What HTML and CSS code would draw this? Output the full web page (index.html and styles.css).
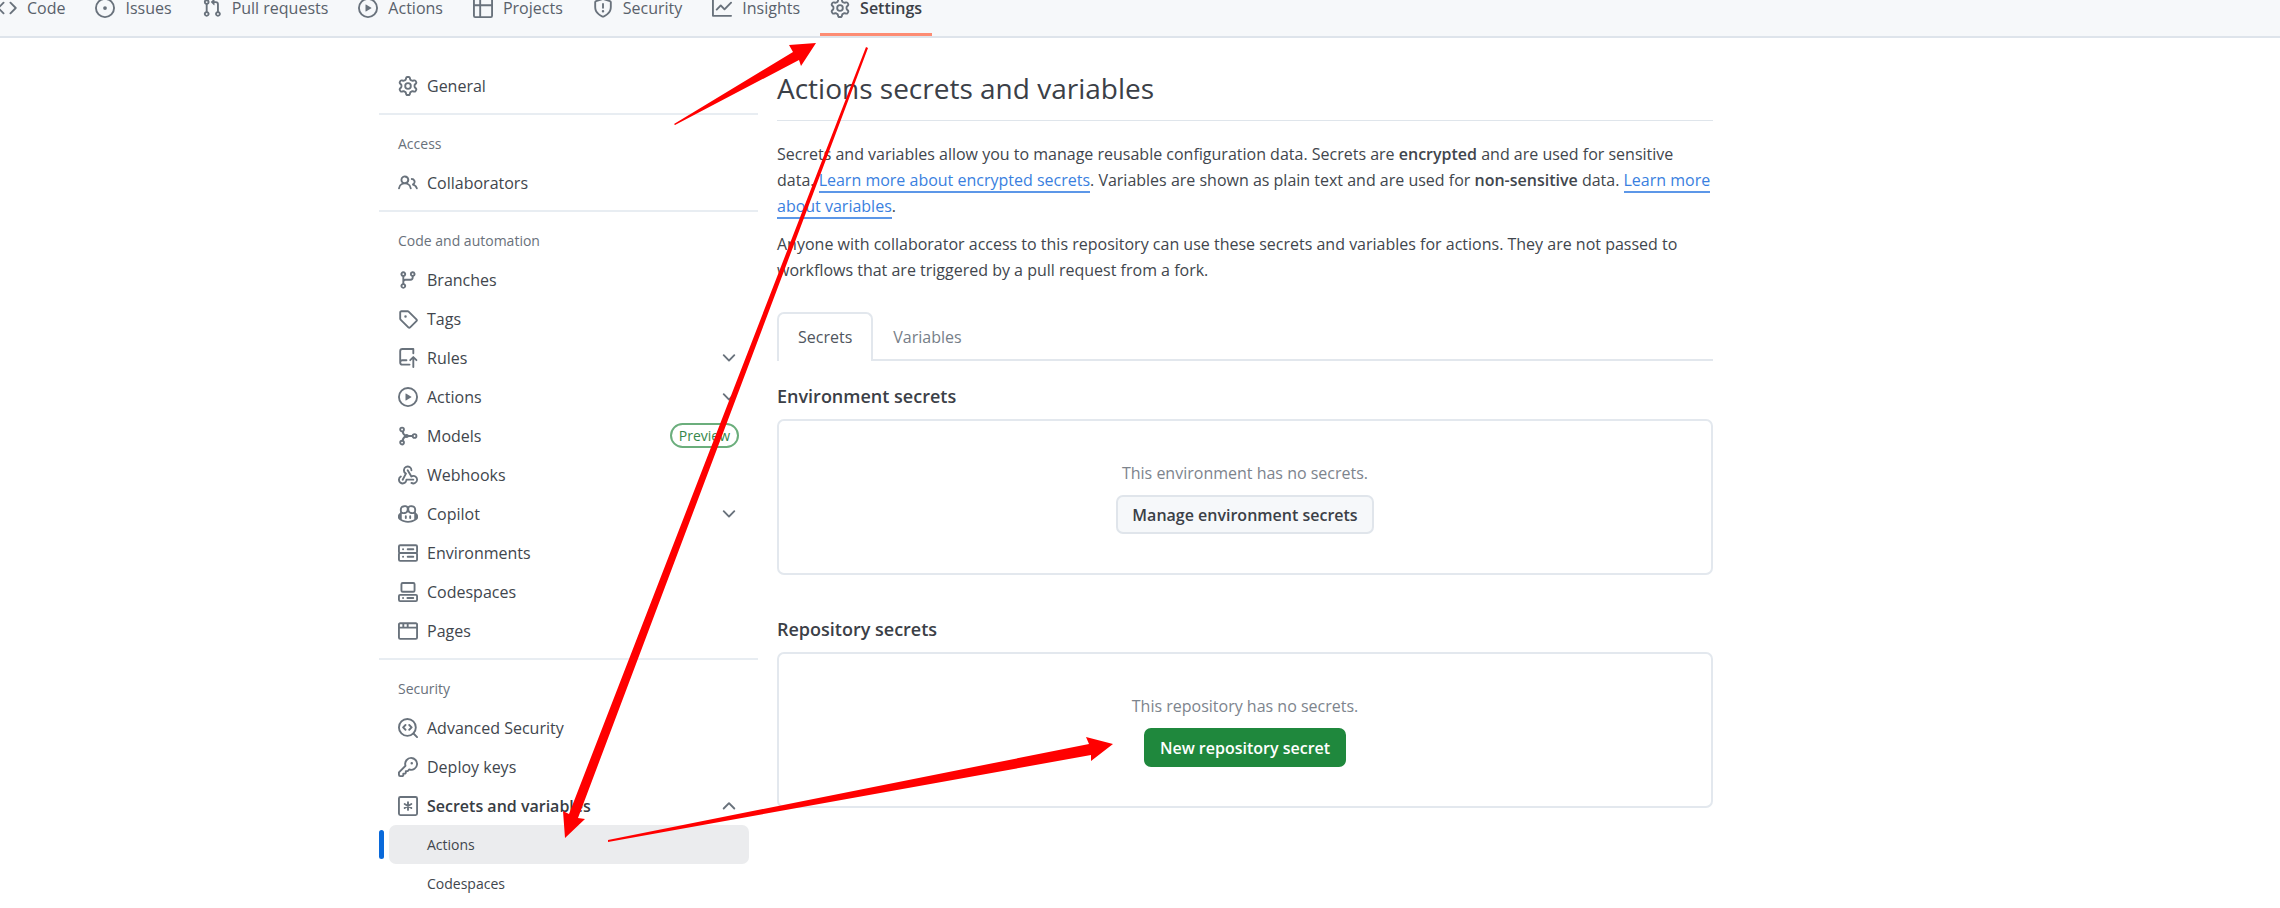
FILE: index.html
```html
<!DOCTYPE html>
<html lang="en">
<head>
    <meta charset="UTF-8">
    <title>Actions secrets and variables</title>
    <link rel="stylesheet" href="styles.css">
</head>
<body>
    <!-- icon set -->
    <svg class="sprite" aria-hidden="true">
        <symbol id="i-code" viewBox="0 0 16 16"><path d="m11.28 3.22 4.25 4.25a.75.75 0 0 1 0 1.06l-4.25 4.25a.749.749 0 0 1-1.275-.326.749.749 0 0 1 .215-.734L13.94 8l-3.72-3.72a.749.749 0 0 1 .326-1.275.749.749 0 0 1 .734.215Zm-6.56 0a.751.751 0 0 1 1.042.018.751.751 0 0 1 .018 1.042L2.06 8l3.72 3.72a.749.749 0 0 1-.326 1.275.749.749 0 0 1-.734-.215L.47 8.53a.75.75 0 0 1 0-1.06Z"/></symbol>
        <symbol id="i-issue" viewBox="0 0 16 16"><path d="M8 9.5a1.5 1.5 0 1 0 0-3 1.5 1.5 0 0 0 0 3Z"/><path d="M8 0a8 8 0 1 1 0 16A8 8 0 0 1 8 0ZM1.5 8a6.5 6.5 0 1 0 13 0 6.5 6.5 0 0 0-13 0Z"/></symbol>
        <symbol id="i-pull" viewBox="0 0 16 16"><path d="M1.5 3.25a2.25 2.25 0 1 1 3 2.122v5.256a2.251 2.251 0 1 1-1.5 0V5.372A2.25 2.25 0 0 1 1.5 3.25Zm5.677-.177L9.573.677A.25.25 0 0 1 10 .854V2.5h1A2.5 2.5 0 0 1 13.5 5v5.628a2.251 2.251 0 1 1-1.5 0V5a1 1 0 0 0-1-1h-1v1.646a.25.25 0 0 1-.427.177L7.177 3.427a.25.25 0 0 1 0-.354ZM3.75 2.5a.75.75 0 1 0 0 1.5.75.75 0 0 0 0-1.5Zm0 9.5a.75.75 0 1 0 0 1.5.75.75 0 0 0 0-1.5Zm8.25.75a.75.75 0 1 0 1.5 0 .75.75 0 0 0-1.5 0Z"/></symbol>
        <symbol id="i-play" viewBox="0 0 16 16"><path d="M8 0a8 8 0 1 1 0 16A8 8 0 0 1 8 0ZM1.5 8a6.5 6.5 0 1 0 13 0 6.5 6.5 0 0 0-13 0Zm4.879-2.773 4.264 2.559a.25.25 0 0 1 0 .428l-4.264 2.559A.25.25 0 0 1 6 10.559V5.442a.25.25 0 0 1 .379-.215Z"/></symbol>
        <symbol id="i-table" viewBox="0 0 16 16"><path d="M0 1.75C0 .784.784 0 1.75 0h12.5C15.216 0 16 .784 16 1.75v12.5A1.75 1.75 0 0 1 14.25 16H1.75A1.75 1.75 0 0 1 0 14.25ZM6.5 6.5v8h7.75a.25.25 0 0 0 .25-.25V6.5Zm8-1.5V1.75a.25.25 0 0 0-.25-.25H6.5V5Zm-13 1.5v7.75c0 .138.112.25.25.25H5v-8ZM5 5V1.5H1.75a.25.25 0 0 0-.25.25V5Z"/></symbol>
        <symbol id="i-shield" viewBox="0 0 16 16"><path d="M7.467.133a1.748 1.748 0 0 1 1.066 0l5.25 1.68A1.75 1.75 0 0 1 15 3.48V7c0 1.566-.32 3.182-1.303 4.682-.983 1.498-2.585 2.813-5.032 3.855a1.697 1.697 0 0 1-1.33 0c-2.447-1.042-4.049-2.357-5.032-3.855C1.32 10.182 1 8.566 1 7V3.48a1.75 1.75 0 0 1 1.217-1.667Zm.61 1.429a.25.25 0 0 0-.153 0l-5.25 1.68a.25.25 0 0 0-.174.238V7c0 1.358.275 2.666 1.057 3.86.784 1.194 2.121 2.34 4.366 3.297a.196.196 0 0 0 .154 0c2.245-.956 3.582-2.104 4.366-3.298C13.225 9.666 13.5 8.36 13.5 7V3.48a.251.251 0 0 0-.174-.237l-5.25-1.68ZM8.75 4.75v3a.75.75 0 0 1-1.5 0v-3a.75.75 0 0 1 1.5 0ZM9 10.5a1 1 0 1 1-2 0 1 1 0 0 1 2 0Z"/></symbol>
        <symbol id="i-graph" viewBox="0 0 16 16"><path d="M1.5 1.75V13.5h13.75a.75.75 0 0 1 0 1.5H.75a.75.75 0 0 1-.75-.75V1.75a.75.75 0 0 1 1.5 0Zm14.28 2.53-5.25 5.25a.75.75 0 0 1-1.06 0L7 7.06 4.28 9.78a.751.751 0 0 1-1.042-.018.751.751 0 0 1-.018-1.042l3.25-3.25a.75.75 0 0 1 1.06 0L10 7.94l4.72-4.72a.751.751 0 0 1 1.042.018.751.751 0 0 1 .018 1.042Z"/></symbol>
        <symbol id="i-gear" viewBox="0 0 16 16"><path d="M8 0a8.2 8.2 0 0 1 .701.031C9.444.095 9.99.645 10.16 1.29l.288 1.107c.018.066.079.158.212.224.231.114.454.243.668.386.123.082.233.09.299.071l1.103-.303c.644-.176 1.392.021 1.82.63.27.385.506.792.704 1.218.315.675.111 1.422-.364 1.891l-.814.806c-.049.048-.098.147-.088.294.016.257.016.515 0 .772-.01.147.038.246.088.294l.814.806c.475.469.679 1.216.364 1.891a7.977 7.977 0 0 1-.704 1.217c-.428.61-1.176.807-1.82.63l-1.102-.302c-.067-.019-.177-.011-.3.071a5.909 5.909 0 0 1-.668.386c-.133.066-.194.158-.211.224l-.29 1.106c-.168.646-.715 1.196-1.458 1.26a8.006 8.006 0 0 1-1.402 0c-.743-.064-1.289-.614-1.458-1.26l-.289-1.106c-.018-.066-.079-.158-.212-.224a5.738 5.738 0 0 1-.668-.386c-.123-.082-.233-.09-.299-.071l-1.103.303c-.644.176-1.392-.021-1.82-.63a8.12 8.12 0 0 1-.704-1.218c-.315-.675-.111-1.422.363-1.891l.815-.806c.05-.048.098-.147.088-.294a6.214 6.214 0 0 1 0-.772c.01-.147-.038-.246-.088-.294l-.815-.806C.635 6.045.431 5.298.746 4.623a7.92 7.92 0 0 1 .704-1.217c.428-.61 1.176-.807 1.82-.63l1.102.302c.067.019.177.011.3-.071.214-.143.437-.272.668-.386.133-.066.194-.158.211-.224l.29-1.106C6.009.645 6.556.095 7.299.03 7.53.01 7.764 0 8 0Zm-.571 1.525c-.036.003-.108.036-.137.146l-.289 1.105c-.147.561-.549.967-.998 1.189-.173.086-.34.183-.5.29-.417.278-.97.423-1.529.27l-1.103-.303c-.109-.03-.175.016-.195.045-.22.312-.412.644-.573.99-.014.031-.021.11.059.19l.815.806c.411.406.562.957.53 1.456a4.709 4.709 0 0 0 0 .582c.032.499-.119 1.05-.53 1.456l-.815.806c-.081.08-.073.159-.059.19.162.346.353.677.573.989.02.03.085.076.195.046l1.102-.303c.56-.153 1.113-.008 1.53.27.161.107.328.204.501.29.447.222.85.629.997 1.189l.289 1.105c.029.109.101.143.137.146a6.6 6.6 0 0 0 1.142 0c.036-.003.108-.036.137-.146l.289-1.105c.147-.561.549-.967.998-1.189.173-.086.34-.183.5-.29.417-.278.97-.423 1.529-.27l1.103.303c.109.029.175-.016.195-.045.22-.313.411-.644.573-.99.014-.031.021-.11-.059-.19l-.815-.806c-.411-.406-.562-.957-.53-1.456a4.709 4.709 0 0 0 0-.582c-.032-.499.119-1.05.53-1.456l.815-.806c.081-.08.073-.159.059-.19a6.464 6.464 0 0 0-.573-.989c-.02-.03-.085-.076-.195-.046l-1.102.303c-.56.153-1.113.008-1.53-.27a4.44 4.44 0 0 0-.501-.29c-.447-.222-.85-.629-.997-1.189l-.289-1.105c-.029-.11-.101-.143-.137-.146a6.6 6.6 0 0 0-1.142 0ZM11 8a3 3 0 1 1-6 0 3 3 0 0 1 6 0ZM9.5 8a1.5 1.5 0 1 0-3.001.001A1.5 1.5 0 0 0 9.5 8Z"/></symbol>
        <symbol id="i-people" viewBox="0 0 16 16"><path d="M2 5.5a3.5 3.5 0 1 1 5.898 2.549 5.508 5.508 0 0 1 3.034 4.084.75.75 0 1 1-1.482.235 4 4 0 0 0-7.9 0 .75.75 0 0 1-1.482-.236A5.507 5.507 0 0 1 3.102 8.05 3.493 3.493 0 0 1 2 5.5ZM11 4a3.001 3.001 0 0 1 2.22 5.018 5.01 5.01 0 0 1 2.56 3.012.749.749 0 0 1-.885.954.752.752 0 0 1-.549-.514 3.507 3.507 0 0 0-2.522-2.372.75.75 0 0 1-.574-.73v-.352a.75.75 0 0 1 .416-.672A1.5 1.5 0 0 0 11 5.5.75.75 0 0 1 11 4Zm-5.5-.5a2 2 0 1 0-.001 3.999A2 2 0 0 0 5.5 3.5Z"/></symbol>
        <symbol id="i-branch" viewBox="0 0 16 16"><path d="M9.5 3.25a2.25 2.25 0 1 1 3 2.122V6A2.5 2.5 0 0 1 10 8.5H6a1 1 0 0 0-1 1v1.128a2.251 2.251 0 1 1-1.5 0V5.372a2.25 2.25 0 1 1 1.5 0v1.836A2.493 2.493 0 0 1 6 7h4a1 1 0 0 0 1-1v-.628A2.25 2.25 0 0 1 9.5 3.25Zm-6 0a.75.75 0 1 0 1.5 0 .75.75 0 0 0-1.5 0Zm8.25-.75a.75.75 0 1 0 0 1.5.75.75 0 0 0 0-1.5ZM4.25 12a.75.75 0 1 0 0 1.5.75.75 0 0 0 0-1.5Z"/></symbol>
        <symbol id="i-tag" viewBox="0 0 16 16"><path d="M1 7.775V2.75C1 1.784 1.784 1 2.75 1h5.025c.464 0 .91.184 1.238.513l6.25 6.25a1.75 1.75 0 0 1 0 2.474l-5.026 5.026a1.75 1.75 0 0 1-2.474 0l-6.25-6.25A1.752 1.752 0 0 1 1 7.775Zm1.5 0c0 .066.026.13.073.177l6.25 6.25a.25.25 0 0 0 .354 0l5.025-5.025a.25.25 0 0 0 0-.354l-6.25-6.25a.25.25 0 0 0-.177-.073H2.75a.25.25 0 0 0-.25.25ZM6 5a1 1 0 1 1 0 2 1 1 0 0 1 0-2Z"/></symbol>
        <symbol id="i-push" viewBox="0 0 16 16"><path d="M1 2.5A2.5 2.5 0 0 1 3.5 0h8.75a.75.75 0 0 1 .75.75v3.5a.75.75 0 0 1-1.5 0V1.5h-8a1 1 0 0 0-1 1v6.708A2.493 2.493 0 0 1 3.5 9h3.25a.75.75 0 0 1 0 1.5H3.5a1 1 0 0 0 0 2h5.75a.75.75 0 0 1 0 1.5H3.5A2.5 2.5 0 0 1 1 11.5Zm13.23 7.79-1.23-1.224v6.184a.75.75 0 0 1-1.5 0V9.066l-1.224 1.224a.75.75 0 0 1-1.06-1.06l2.505-2.504a.75.75 0 0 1 1.06 0L15.28 9.23a.751.751 0 0 1-.018 1.042.751.751 0 0 1-1.032.018Z"/></symbol>
        <symbol id="i-models" viewBox="0 0 16 16"><g fill="none" stroke="currentColor" stroke-width="1.5"><circle cx="3.25" cy="2.75" r="1.5"/><circle cx="3.25" cy="13.25" r="1.5"/><circle cx="13.25" cy="8" r="1.5"/><path d="M3.6 4.2C4 6 5 7.4 6.6 8 5 8.6 4 10 3.6 11.8M6.4 8h5.3"/></g><circle cx="7" cy="8" r="1.6"/></symbol>
        <symbol id="i-webhook" viewBox="0 0 16 16"><path d="M5.5 4.25a2.25 2.25 0 0 1 4.5 0 .75.75 0 0 0 1.5 0 3.75 3.75 0 1 0-6.14 2.889l-2.272 4.258a.75.75 0 0 0 1.324.706L7 7.25a.75.75 0 0 0-.309-1.015A2.25 2.25 0 0 1 5.5 4.25Z"/><path d="M7.364 3.607a.75.75 0 0 1 1.03.257l2.608 4.349a3.75 3.75 0 1 1-.628 6.785.75.75 0 0 1 .752-1.299 2.25 2.25 0 1 0-.033-3.88.75.75 0 0 1-1.03-.256L7.107 4.636a.75.75 0 0 1 .257-1.03Z"/><path d="M2.9 8.776A.75.75 0 0 1 2.625 9.8 2.25 2.25 0 1 0 6 11.75a.75.75 0 0 1 .75-.751h5.5a.75.75 0 0 1 0 1.5H7.425a3.751 3.751 0 1 1-5.55-3.998.75.75 0 0 1 1.024.274Z"/></symbol>
        <symbol id="i-copilot" viewBox="0 0 16 16"><path d="M7.998 15.035c-4.562 0-7.873-2.914-7.998-3.749V9.338c.085-.628.677-1.686 1.588-2.065.013-.07.024-.143.036-.218.029-.183.06-.384.126-.612-.201-.508-.254-1.084-.254-1.656 0-.87.128-1.769.693-2.484.579-.733 1.494-1.124 2.724-1.261 1.206-.134 2.262.034 2.944.765.05.053.096.108.139.165.044-.057.094-.112.143-.165.682-.731 1.738-.899 2.944-.765 1.23.137 2.145.528 2.724 1.261.566.715.693 1.614.693 2.484 0 .572-.053 1.148-.254 1.656.066.228.098.429.126.612.012.076.024.148.037.218.924.385 1.522 1.471 1.591 2.095v1.872c0 .766-3.351 3.795-8.002 3.795Zm0-1.485c2.28 0 4.584-1.11 5.002-1.433V7.862l-.023-.116c-.49.21-1.075.291-1.727.291-1.146 0-2.059-.327-2.71-.991A3.222 3.222 0 0 1 8 6.303a3.24 3.24 0 0 1-.544.743c-.65.664-1.563.991-2.71.991-.652 0-1.236-.081-1.727-.291l-.023.116v4.255c.419.323 2.722 1.433 5.002 1.433ZM6.762 2.83c-.193-.206-.637-.413-1.682-.297-1.019.113-1.479.404-1.713.7-.247.312-.369.789-.369 1.554 0 .793.129 1.171.308 1.371.162.181.519.379 1.442.379.853 0 1.339-.235 1.638-.54.315-.322.527-.827.617-1.553.117-.935-.037-1.395-.241-1.614Zm4.155-.297c-1.044-.116-1.488.091-1.681.297-.204.219-.359.679-.242 1.614.091.726.303 1.231.618 1.553.299.305.784.54 1.638.54.922 0 1.28-.198 1.442-.379.179-.2.308-.578.308-1.371 0-.765-.123-1.242-.37-1.554-.233-.296-.693-.587-1.713-.7Z"/><path d="M6.25 9.037a.75.75 0 0 1 .75.75v1.501a.75.75 0 0 1-1.5 0V9.787a.75.75 0 0 1 .75-.75Zm4.25.75v1.501a.75.75 0 0 1-1.5 0V9.787a.75.75 0 0 1 1.5 0Z"/></symbol>
        <symbol id="i-server" viewBox="0 0 16 16"><g fill="none" stroke="currentColor" stroke-width="1.5" stroke-linecap="round"><rect x=".75" y="1.75" width="14.5" height="6.25" rx="1"/><rect x=".75" y="8" width="14.5" height="6.25" rx="1"/><path d="M4 5h.1M7.75 5h4.5M4 11h.1M7.75 11h4.5"/></g></symbol>
        <symbol id="i-codespaces" viewBox="0 0 16 16"><g fill="none" stroke="currentColor" stroke-width="1.5" stroke-linecap="round"><rect x="2.75" y=".75" width="10.5" height="7" rx="1"/><rect x=".75" y="10.25" width="14.5" height="5" rx="1"/><path d="M4 12.75h.1M7.5 12.75h4.7"/></g></symbol>
        <symbol id="i-browser" viewBox="0 0 16 16"><path d="M0 2.75C0 1.784.784 1 1.75 1h12.5c.966 0 1.75.784 1.75 1.75v10.5A1.75 1.75 0 0 1 14.25 15H1.75A1.75 1.75 0 0 1 0 13.25ZM14.5 6h-13v7.25c0 .138.112.25.25.25h12.5a.25.25 0 0 0 .25-.25Zm-6-3.5v2h6V2.75a.25.25 0 0 0-.25-.25ZM5 2.5v2h2v-2Zm-3.25 0a.25.25 0 0 0-.25.25V4.5h2v-2Z"/></symbol>
        <symbol id="i-codescan" viewBox="0 0 16 16"><g fill="none" stroke="currentColor" stroke-width="1.5" stroke-linecap="round" stroke-linejoin="round"><circle cx="7.5" cy="7.5" r="6.75"/><path d="m12.4 12.4 2.85 2.85M6 5.6 4.1 7.5 6 9.4M9 5.6l1.9 1.9L9 9.4"/></g></symbol>
        <symbol id="i-key" viewBox="0 0 16 16"><path d="M10.5 0a5.499 5.499 0 1 1-1.288 10.848l-.932.932a.749.749 0 0 1-.53.22H7v.75a.749.749 0 0 1-.22.53l-.5.5a.749.749 0 0 1-.53.22H5v.75a.749.749 0 0 1-.22.53l-.5.5a.749.749 0 0 1-.53.22h-2A1.75 1.75 0 0 1 0 14.25v-2c0-.199.079-.389.22-.53l4.932-4.932A5.5 5.5 0 0 1 10.5 0Zm-4 5.5c-.001.431.069.86.205 1.269a.75.75 0 0 1-.181.768L1.5 12.56v1.69c0 .138.112.25.25.25h1.69l.06-.06v-1.19a.75.75 0 0 1 .75-.75h1.19l.06-.06v-1.19a.75.75 0 0 1 .75-.75h1.19l1.023-1.025a.75.75 0 0 1 .768-.18A4 4 0 1 0 6.5 5.5ZM11 6a1 1 0 1 1 0-2 1 1 0 0 1 0 2Z"/></symbol>
        <symbol id="i-asterisk" viewBox="0 0 16 16"><g fill="none" stroke="currentColor" stroke-width="1.5" stroke-linecap="round"><rect x=".75" y=".75" width="14.5" height="14.5" rx="1.2"/><path d="M8 4.9v6.2M5.3 6.4l5.4 3.2M10.7 6.4 5.3 9.6"/></g></symbol>
        <symbol id="i-down" viewBox="0 0 16 16"><path d="M12.78 5.22a.749.749 0 0 1 0 1.06l-4.25 4.25a.749.749 0 0 1-1.06 0L3.22 6.28a.749.749 0 1 1 1.06-1.06L8 8.939l3.72-3.719a.749.749 0 0 1 1.06 0Z"/></symbol>
        <symbol id="i-up" viewBox="0 0 16 16"><path d="M3.22 10.53a.749.749 0 0 1 0-1.06l4.25-4.25a.749.749 0 0 1 1.06 0l4.25 4.25a.749.749 0 1 1-1.06 1.06L8 6.811 4.28 10.53a.749.749 0 0 1-1.06 0Z"/></symbol>
    </svg>

    <nav class="repo-nav" aria-label="Repository">
        <a href="#"><svg class="icon"><use href="#i-code"/></svg>Code</a>
        <a href="#"><svg class="icon"><use href="#i-issue"/></svg>Issues</a>
        <a href="#"><svg class="icon"><use href="#i-pull"/></svg>Pull requests</a>
        <a href="#"><svg class="icon"><use href="#i-play"/></svg>Actions</a>
        <a href="#"><svg class="icon"><use href="#i-table"/></svg>Projects</a>
        <a href="#"><svg class="icon"><use href="#i-shield"/></svg>Security</a>
        <a href="#"><svg class="icon"><use href="#i-graph"/></svg>Insights</a>
        <a class="selected" href="#"><svg class="icon"><use href="#i-gear"/></svg>Settings</a>
    </nav>

    <div class="layout">
        <aside class="sidebar">
            <ul class="menu">
                <li><a href="#"><svg class="icon"><use href="#i-gear"/></svg>General</a></li>
            </ul>
            <h2>Access</h2>
            <ul class="menu">
                <li><a href="#"><svg class="icon"><use href="#i-people"/></svg>Collaborators</a></li>
            </ul>
            <h2>Code and automation</h2>
            <ul class="menu">
                <li><a href="#"><svg class="icon"><use href="#i-branch"/></svg>Branches</a></li>
                <li><a href="#"><svg class="icon"><use href="#i-tag"/></svg>Tags</a></li>
                <li><button type="button"><svg class="icon"><use href="#i-push"/></svg>Rules<svg class="icon end"><use href="#i-down"/></svg></button></li>
                <li><button type="button"><svg class="icon"><use href="#i-play"/></svg>Actions<svg class="icon end"><use href="#i-down"/></svg></button></li>
                <li><a href="#"><svg class="icon"><use href="#i-models"/></svg>Models<span class="badge end">Preview</span></a></li>
                <li><a href="#"><svg class="icon"><use href="#i-webhook"/></svg>Webhooks</a></li>
                <li><button type="button"><svg class="icon"><use href="#i-copilot"/></svg>Copilot<svg class="icon end"><use href="#i-down"/></svg></button></li>
                <li><a href="#"><svg class="icon"><use href="#i-server"/></svg>Environments</a></li>
                <li><a href="#"><svg class="icon"><use href="#i-codespaces"/></svg>Codespaces</a></li>
                <li><a href="#"><svg class="icon"><use href="#i-browser"/></svg>Pages</a></li>
            </ul>
            <h2>Security</h2>
            <ul class="menu">
                <li><a href="#"><svg class="icon"><use href="#i-codescan"/></svg>Advanced Security</a></li>
                <li><a href="#"><svg class="icon"><use href="#i-key"/></svg>Deploy keys</a></li>
                <li>
                    <button class="open" type="button"><svg class="icon"><use href="#i-asterisk"/></svg>Secrets and variables<svg class="icon end"><use href="#i-up"/></svg></button>
                    <ul class="submenu">
                        <li class="current"><a href="#">Actions</a></li>
                        <li><a href="#">Codespaces</a></li>
                    </ul>
                </li>
            </ul>
        </aside>

        <main class="content">
            <h1>Actions secrets and variables</h1>
            <p>Secrets and variables allow you to manage reusable configuration data. Secrets are <strong>encrypted</strong> and are used for sensitive data. <a href="#">Learn more about encrypted secrets</a>. Variables are shown as plain text and are used for <strong>non-sensitive</strong> data. <a href="#">Learn more about variables</a>.</p>
            <p>Anyone with collaborator access to this repository can use these secrets and variables for actions. They are not passed to workflows that are triggered by a pull request from a fork.</p>

            <div class="tabs">
                <a class="selected" href="#">Secrets</a>
                <a href="#">Variables</a>
            </div>

            <section>
                <h2>Environment secrets</h2>
                <div class="box">
                    <span>This environment has no secrets.</span>
                    <button class="btn" type="button">Manage environment secrets</button>
                </div>
            </section>
            <section>
                <h2>Repository secrets</h2>
                <div class="box">
                    <span>This repository has no secrets.</span>
                    <button class="btn primary" type="button">New repository secret</button>
                </div>
            </section>
        </main>
    </div>

    <!-- red pointers drawn over the page -->
    <svg class="pointers" width="2280" height="908" viewBox="0 0 2280 908" aria-hidden="true">
        <path d="M674 124 793 52 789 45 816 43 801 66 799 60 675 125Z"/>
        <path d="M866 47 569 814 563 811 565 838 585 819 578 818 868 48Z"/>
        <path d="M608 840 1089 744 1086 737 1113 744 1091 761 1091 755 608 842Z"/>
    </svg>
</body>
</html>
```
FILE: styles.css
```css
*{
    box-sizing: border-box;
    margin: 0;
    padding: 0;
}
body{
    background: #fff;
    color: #41464d;
    font: 16px/26px "Open Sans", "Noto Sans", sans-serif;
    overflow: hidden;
}
ul{
    list-style: none;
}
a{
    color: inherit;
    text-decoration: none;
}
button{
    font: inherit;
    color: inherit;
    cursor: pointer;
}
strong,h2{
    font-weight: 600;
}
.sprite{
    display: none;
}
.icon{
    flex: none;
    width: 20px;
    height: 20px;
    color: #69727c;
    fill: currentColor;
}
.end{
    margin-left: auto;
}

/* top navigation, scrolled partly out of view */
.repo-nav{
    display: flex;
    gap: 10px;
    height: 59px;
    margin-top: -21px;
    margin-left: -13px;
    background: #f6f8fa;
    border-bottom: 2px solid #dee4eb;
}
.repo-nav a{
    display: flex;
    align-items: center;
    gap: 10px;
    padding: 0 10px;
    color: #59616b;
}
.repo-nav .selected{
    color: #3b4047;
    font-weight: 600;
    border-bottom: 3px solid #fd8c73;
    border-top: 3px solid transparent;
}

.layout{
    display: grid;
    grid-template-columns: 379px minmax(0, 936px);
    gap: 19px;
    padding: 28px 20px 0 379px;
}

/* sidebar */
.menu a,.menu button{
    display: flex;
    align-items: center;
    gap: 9px;
    width: 100%;
    height: 39px;
    padding: 0 10px 0 9px;
    background: none;
    border: 0;
    text-align: left;
}
.menu{
    padding: 0 9px 0 10px;
}
.menu .open{
    font-weight: 600;
    color: #383d44;
}
.sidebar h2{
    margin-top: 8px;
    padding: 9px 19px 0;
    border-top: 2px solid #e8edf2;
    color: #69717b;
    font-size: 14px;
    font-weight: 500;
    line-height: 39px;
}
.badge{
    height: 25px;
    padding: 0 7px;
    border: 2px solid #6bae7c;
    border-radius: 13px;
    color: #35874a;
    font-size: 14px;
    line-height: 21px;
}
.submenu a{
    padding-left: 38px;
    border-radius: 7px;
    font-size: 14px;
}
.current{
    position: relative;
}
.current a{
    background: #ebecee;
}
.current::before{
    content: "";
    position: absolute;
    left: -10px;
    top: 5px;
    width: 5px;
    height: 29px;
    border-radius: 3px;
    background: #0969da;
}

/* content */
.content h1{
    margin-bottom: 20px;
    padding-bottom: 10px;
    border-bottom: 1px solid #dfe5eb;
    color: #3b4047;
    font-size: 28px;
    font-weight: 400;
    line-height: 44px;
}
.content p{
    margin-bottom: 12px;
}
.content p a{
    color: #3a7fe0;
    border-bottom: 2px solid #5c97e8;
}
.tabs{
    display: flex;
    height: 49px;
    margin-top: 29px;
    margin-bottom: 22px;
    border-bottom: 2px solid #e2e7ed;
}
.tabs a{
    height: 49px;
    padding: 2px 20px;
    line-height: 46px;
    color: #767e88;
}
.tabs .selected{
    padding: 0 19px;
    background: #fff;
    border: 2px solid #e2e7ed;
    border-bottom: 0;
    border-radius: 7px 7px 0 0;
    color: #50565e;
}
.content h2{
    margin-bottom: 10px;
    color: #3b4047;
    font-size: 18px;
}
.box{
    display: flex;
    flex-direction: column;
    align-items: center;
    gap: 9px;
    margin-bottom: 41px;
    padding: 39px 20px;
    border: 2px solid #e3e8ee;
    border-radius: 7px;
    color: #7d848d;
}
.btn{
    height: 39px;
    padding: 0 14px;
    background: #f6f8fa;
    border: 2px solid #e0e5eb;
    border-radius: 7px;
    color: #3b4047;
    font-weight: 600;
}
.primary{
    background: #1f883d;
    border-color: #1f883d;
    color: #fff;
}

.pointers{
    position: absolute;
    left: 0;
    top: 0;
    fill: #f00;
    pointer-events: none;
}
```
